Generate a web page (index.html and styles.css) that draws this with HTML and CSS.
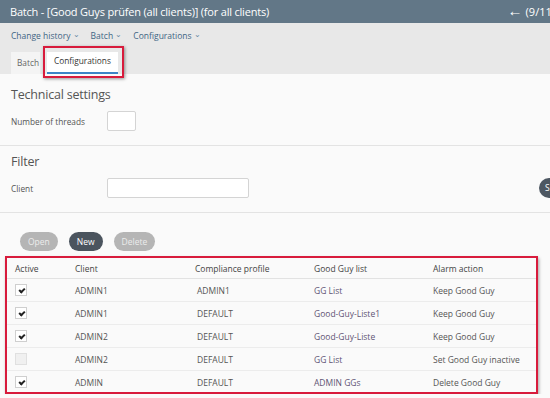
FILE: index.html
```html
<!DOCTYPE html>
<html lang="en">
<head>
  <meta charset="UTF-8">
  <title>Batch - Configurations</title>
  <link rel="stylesheet" href="styles.css">
</head>
<body>
  <div class="titlebar">
    <span class="title">Batch - [Good Guys prüfen (all clients)] (for all clients)</span>
    <span class="pager"><span class="arrow">&larr;</span> (9/11)</span>
  </div>

  <div class="menubar">
    <div class="menu">
      <span class="menu-item">Change history <span class="caret">&#8964;</span></span>
      <span class="menu-item">Batch <span class="caret">&#8964;</span></span>
      <span class="menu-item">Configurations <span class="caret">&#8964;</span></span>
    </div>
    <div class="tabs">
      <span class="tab">Batch</span>
      <span class="tab active">Configurations</span>
    </div>
  </div>

  <div class="content">
    <h3 class="section-title">Technical settings</h3>
    <div class="field">
      <label class="field-label">Number of threads</label>
      <span class="input small"></span>
    </div>

    <hr class="divider">

    <h3 class="section-title filter">Filter</h3>
    <div class="field">
      <label class="field-label">Client</label>
      <span class="input wide"></span>
      <span class="search-btn">S</span>
    </div>

    <hr class="divider">

    <div class="actions">
      <span class="btn disabled">Open</span>
      <span class="btn primary">New</span>
      <span class="btn disabled">Delete</span>
    </div>

    <div class="table-box">
      <table class="grid">
        <thead>
          <tr>
            <th class="c-active">Active</th>
            <th class="c-client">Client</th>
            <th class="c-profile">Compliance profile</th>
            <th class="c-list">Good Guy list</th>
            <th>Alarm action</th>
          </tr>
        </thead>
        <tbody>
          <tr>
            <td><span class="check on"></span></td>
            <td>ADMIN1</td>
            <td class="profile">ADMIN1</td>
            <td class="link">GG List</td>
            <td>Keep Good Guy</td>
          </tr>
          <tr>
            <td><span class="check on"></span></td>
            <td>ADMIN1</td>
            <td class="profile">DEFAULT</td>
            <td class="link">Good-Guy-Liste1</td>
            <td>Keep Good Guy</td>
          </tr>
          <tr>
            <td><span class="check on"></span></td>
            <td>ADMIN2</td>
            <td class="profile">DEFAULT</td>
            <td class="link">Good-Guy-Liste</td>
            <td>Keep Good Guy</td>
          </tr>
          <tr>
            <td><span class="check off"></span></td>
            <td>ADMIN2</td>
            <td class="profile">DEFAULT</td>
            <td class="link">GG List</td>
            <td>Set Good Guy inactive</td>
          </tr>
          <tr>
            <td><span class="check on"></span></td>
            <td>ADMIN</td>
            <td class="profile">DEFAULT</td>
            <td class="link">ADMIN GGs</td>
            <td>Delete Good Guy</td>
          </tr>
        </tbody>
      </table>
    </div>
  </div>
</body>
</html>
```

FILE: styles.css
```css
body {
  margin: 0;
  font-family: "Open Sans", "Liberation Sans", sans-serif;
  background: #fafafa;
  color: #555;
  overflow: hidden;
}

.titlebar {
  height: 23px;
  background: #627787;
  color: #fff;
  display: flex;
  align-items: center;
  justify-content: space-between;
  padding: 0 0 0 10px;
  white-space: nowrap;
  overflow: hidden;
}
.title {
  font-size: 11px;
  letter-spacing: -0.2px;
}
.pager {
  font-size: 11px;
  margin-right: -5px;
  display: flex;
  align-items: center;
  gap: 3px;
}
.pager .arrow {
  font-size: 15px;
  line-height: 15px;
  position: relative;
  top: -1px;
}

.menubar {
  background: #e8e8e8;
  height: 51px;
  padding: 0 11px;
  box-sizing: border-box;
}
.menu {
  display: flex;
  gap: 11px;
  padding-top: 7px;
  height: 22px;
  font-size: 8.5px;
  color: #3f6584;
}
.caret {
  font-size: 8px;
  color: #6a8aa3;
  position: relative;
  top: -2px;
}
.tabs {
  display: flex;
  gap: 7px;
}
.tab {
  height: 22px;
  line-height: 21px;
  padding: 0 0 0 6px;
  width: 23px;
  font-size: 8.3px;
  background: #f4f4f4;
  color: #666;
}
.tab.active {
  position: relative;
  width: auto;
  padding: 0 7px 0 7px;
  background: #fff;
  color: #333;
  border-bottom: 2px solid #3c84c6;
  height: 20px;
  line-height: 18px;
}
.tab.active::after {
  content: "";
  position: absolute;
  left: -4px;
  right: -6px;
  top: -6px;
  bottom: -6px;
  border: 2px solid #d81b3c;
  box-shadow: 1px 1px 3px rgba(0, 0, 0, 0.4);
}

.section-title {
  margin: 0;
  padding: 11px 11px 0;
  font-size: 12.5px;
  line-height: 20px;
  letter-spacing: -0.2px;
  font-weight: normal;
  color: #555;
}
.section-title.filter {
  padding-top: 6px;
}
.field {
  display: flex;
  align-items: center;
  margin-top: 6px;
  padding-left: 11px;
  height: 20px;
}
.field-label {
  width: 96px;
  font-size: 8.3px;
  color: #555;
}
.input {
  height: 20px;
  background: #fff;
  border: 1px solid #d4d4d4;
  border-radius: 2px;
  box-sizing: border-box;
}
.input.small {
  width: 29px;
}
.input.wide {
  width: 142px;
}
.search-btn {
  margin-left: auto;
  margin-right: -20px;
  width: 31px;
  height: 20px;
  border-radius: 10px;
  background: #4d5762;
  color: #fff;
  font-size: 8.5px;
  line-height: 20px;
  padding-left: 6px;
  box-sizing: border-box;
}
.divider {
  border: 0;
  border-top: 1px solid #e3e3e3;
  margin: 14px 0 0 0;
}

.actions {
  display: flex;
  gap: 11px;
  padding: 19px 0 0 20px;
  height: 19px;
}
.btn {
  height: 19px;
  line-height: 19px;
  border-radius: 10px;
  padding: 0 8px;
  font-size: 8.5px;
  color: #fff;
}
.btn.disabled {
  background: #b5b5b5;
  color: #ececec;
}
.btn.primary {
  background: #4b545e;
}

.table-box {
  margin: 5px 0 0 5px;
  width: 533px;
  height: 138px;
  border: 2px solid #d81b3c;
  box-sizing: border-box;
  box-shadow: 1px 2px 3px rgba(0, 0, 0, 0.35);
  overflow: hidden;
}
.grid {
  border-collapse: collapse;
  width: 100%;
  font-size: 8.5px;
}
.grid th {
  text-align: left;
  font-weight: normal;
  color: #444;
  height: 20px;
  padding: 0 0 0 8px;
  border-bottom: 1px solid #e2e2e2;
}
.grid td {
  height: 22px;
  padding: 0 0 0 8px;
  border-bottom: 1px solid #ececec;
  color: #555;
}
.grid tr:last-child td {
  border-bottom: 0;
}
.c-active { width: 52px; }
.c-client { width: 112px; }
.c-profile { width: 111px; }
.c-list { width: 111px; }
.grid td.profile {
  padding-left: 10px;
}
.grid td.link {
  color: #5f5474;
}
.check {
  display: inline-block;
  width: 10px;
  height: 10px;
  border: 1px solid #cfcfcf;
  background: #fff;
  vertical-align: middle;
  position: relative;
}
.check.on::after {
  content: "";
  position: absolute;
  left: 3.5px;
  top: 1.5px;
  width: 2px;
  height: 4px;
  border: solid #222;
  border-width: 0 2px 2px 0;
  transform: rotate(45deg);
}
.check.off {
  background: #f0f0f0;
  border-color: #e0e0e0;
}
```
